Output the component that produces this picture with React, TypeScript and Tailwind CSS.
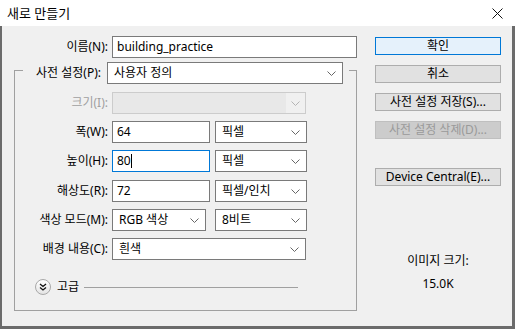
import React from 'react';

const Chevron = ({ disabled = false }: { disabled?: boolean }) => (
  <svg width="9" height="5" viewBox="0 0 9 5" className="shrink-0">
    <polyline points="0.5,0.5 4.5,4.5 8.5,0.5" fill="none" stroke={disabled ? '#b4b4b4' : '#666'} strokeWidth="1" />
  </svg>
);

const Select = ({ value, w }: { value: string; w: string }) => (
  <div className={`${w} h-[22px] flex items-center justify-between bg-white border border-[#7a7a7a] pl-[6px] pr-[6px]`}>
    <span className="leading-none">{value}</span>
    <Chevron />
  </div>
);

const Field = ({ value, focused = false }: { value: string; focused?: boolean }) => (
  <div
    className={`w-[98px] h-[22px] flex items-center bg-white border pl-[4px] ${
      focused ? 'border-[#0078d7]' : 'border-[#7a7a7a]'
    }`}
  >
    <span className="leading-none">{value}</span>
    {focused && <span className="w-px h-[14px] bg-black" />}
  </div>
);

const Row = ({
  label,
  children,
  mt,
  disabled = false,
}: {
  label: string;
  children: React.ReactNode;
  mt: string;
  disabled?: boolean;
}) => (
  <div className={`flex items-center ${mt}`}>
    <div className={`w-[93px] text-right leading-none ${disabled ? 'text-[#a0a0a0]' : ''}`}>{label}</div>
    <div className="ml-[4px] flex items-center gap-[5px]">{children}</div>
  </div>
);

const Button = ({ label, kind = 'normal', mt }: { label: string; kind?: 'default' | 'normal' | 'disabled'; mt: string }) => {
  const look =
    kind === 'default'
      ? 'bg-[#e5f1fb] border-[#0078d7] text-black'
      : kind === 'disabled'
      ? 'bg-[#cccccc] border-[#bfbfbf] text-[#9a9a9a]'
      : 'bg-[#e1e1e1] border-[#adadad] text-black';
  return (
    <div className={`w-[126px] h-[18px] border flex items-center justify-center leading-none ${look} ${mt}`}>
      {label}
    </div>
  );
};

export default function App() {
  return (
    <div className="w-[515px] h-[329px] flex flex-col bg-[#f0f0f0] overflow-hidden text-[12px] text-black font-['Noto_Sans','Noto_Sans_CJK_KR',sans-serif]">
      {/* title bar */}
      <div className="h-[26px] shrink-0 bg-white flex items-center justify-between pl-[7px] pr-[12px]">
        <span className="text-[13px] leading-none">새로 만들기</span>
        <svg width="11" height="11" viewBox="0 0 11 11">
          <path d="M0.5 0.5 L10.5 10.5 M10.5 0.5 L0.5 10.5" stroke="#111" strokeWidth="1" />
        </svg>
      </div>

      <div className="flex-1 flex border-l-2 border-r-[3px] border-b-[3px] border-[#6b6b6b]">
        {/* left side */}
        <div className="w-[357px] shrink-0 pt-[10px]">
          <div className="flex items-center">
            <div className="w-[106px] text-right leading-none">이름(N):</div>
            <div className="ml-[4px] w-[245px] h-[22px] flex items-center bg-white border border-[#7a7a7a] pl-[4px]">
              <span className="leading-none">building_practice</span>
            </div>
          </div>

          <div className="mt-[12px] ml-[12px] w-[343px] border border-[#a0a0a0] pb-[15px]">
            <div className="-mt-[9px] ml-[8px] w-[326px] flex items-center bg-[#f0f0f0] pr-[6px]">
              <div className="w-[78px] text-right leading-none">사전 설정(P):</div>
              <div className="ml-[6px]">
                <Select value="사용자 정의" w="w-[236px]" />
              </div>
            </div>

            <Row label="크기(I):" mt="mt-[8px]" disabled>
              <div className="w-[194px] h-[22px] flex border border-[#cccccc] bg-[#e8e8e8]">
                <div className="flex-1" />
                <div className="w-[19px] flex items-center justify-center bg-[#f0f0f0]">
                  <Chevron disabled />
                </div>
              </div>
            </Row>
            <Row label="폭(W):" mt="mt-[7px]">
              <Field value="64" />
              <Select value="픽셀" w="w-[92px]" />
            </Row>
            <Row label="높이(H):" mt="mt-[7px]">
              <Field value="80" focused />
              <Select value="픽셀" w="w-[92px]" />
            </Row>
            <Row label="해상도(R):" mt="mt-[8px]">
              <Field value="72" />
              <Select value="픽셀/인치" w="w-[92px]" />
            </Row>
            <Row label="색상 모드(M):" mt="mt-[7px]">
              <Select value="RGB 색상" w="w-[94px]" />
              <div className="ml-[4px]">
                <Select value="8비트" w="w-[92px]" />
              </div>
            </Row>
            <Row label="배경 내용(C):" mt="mt-[7px]">
              <Select value="흰색" w="w-[194px]" />
            </Row>

            <div className="mt-[19px] ml-[20px] flex items-center">
              <div className="w-[16px] h-[16px] rounded-full border border-[#a8a8a8] bg-gradient-to-b from-white to-[#e4e4e4] flex items-center justify-center">
                <svg width="8" height="8" viewBox="0 0 8 8">
                  <path d="M1 1 L4 3.5 L7 1 M1 4.5 L4 7 L7 4.5" fill="none" stroke="#111" strokeWidth="1.3" />
                </svg>
              </div>
              <span className="ml-[6px] leading-none">고급</span>
              <div className="ml-[5px] w-[214px] h-px bg-[#a0a0a0]" />
            </div>
          </div>
        </div>

        {/* right side */}
        <div className="ml-[16px] w-[126px] pt-[11px] flex flex-col items-center">
          <Button label="확인" kind="default" mt="mt-0" />
          <Button label="취소" mt="mt-[10px]" />
          <Button label="사전 설정 저장(S)..." mt="mt-[10px]" />
          <Button label="사전 설정 삭제(D)..." kind="disabled" mt="mt-[10px]" />
          <Button label="Device Central(E)..." mt="mt-[29px]" />
          <div className="mt-[67px] leading-[16px]">이미지 크기:</div>
          <div className="mt-[7px] leading-[16px]">15.0K</div>
        </div>
      </div>
    </div>
  );
}
